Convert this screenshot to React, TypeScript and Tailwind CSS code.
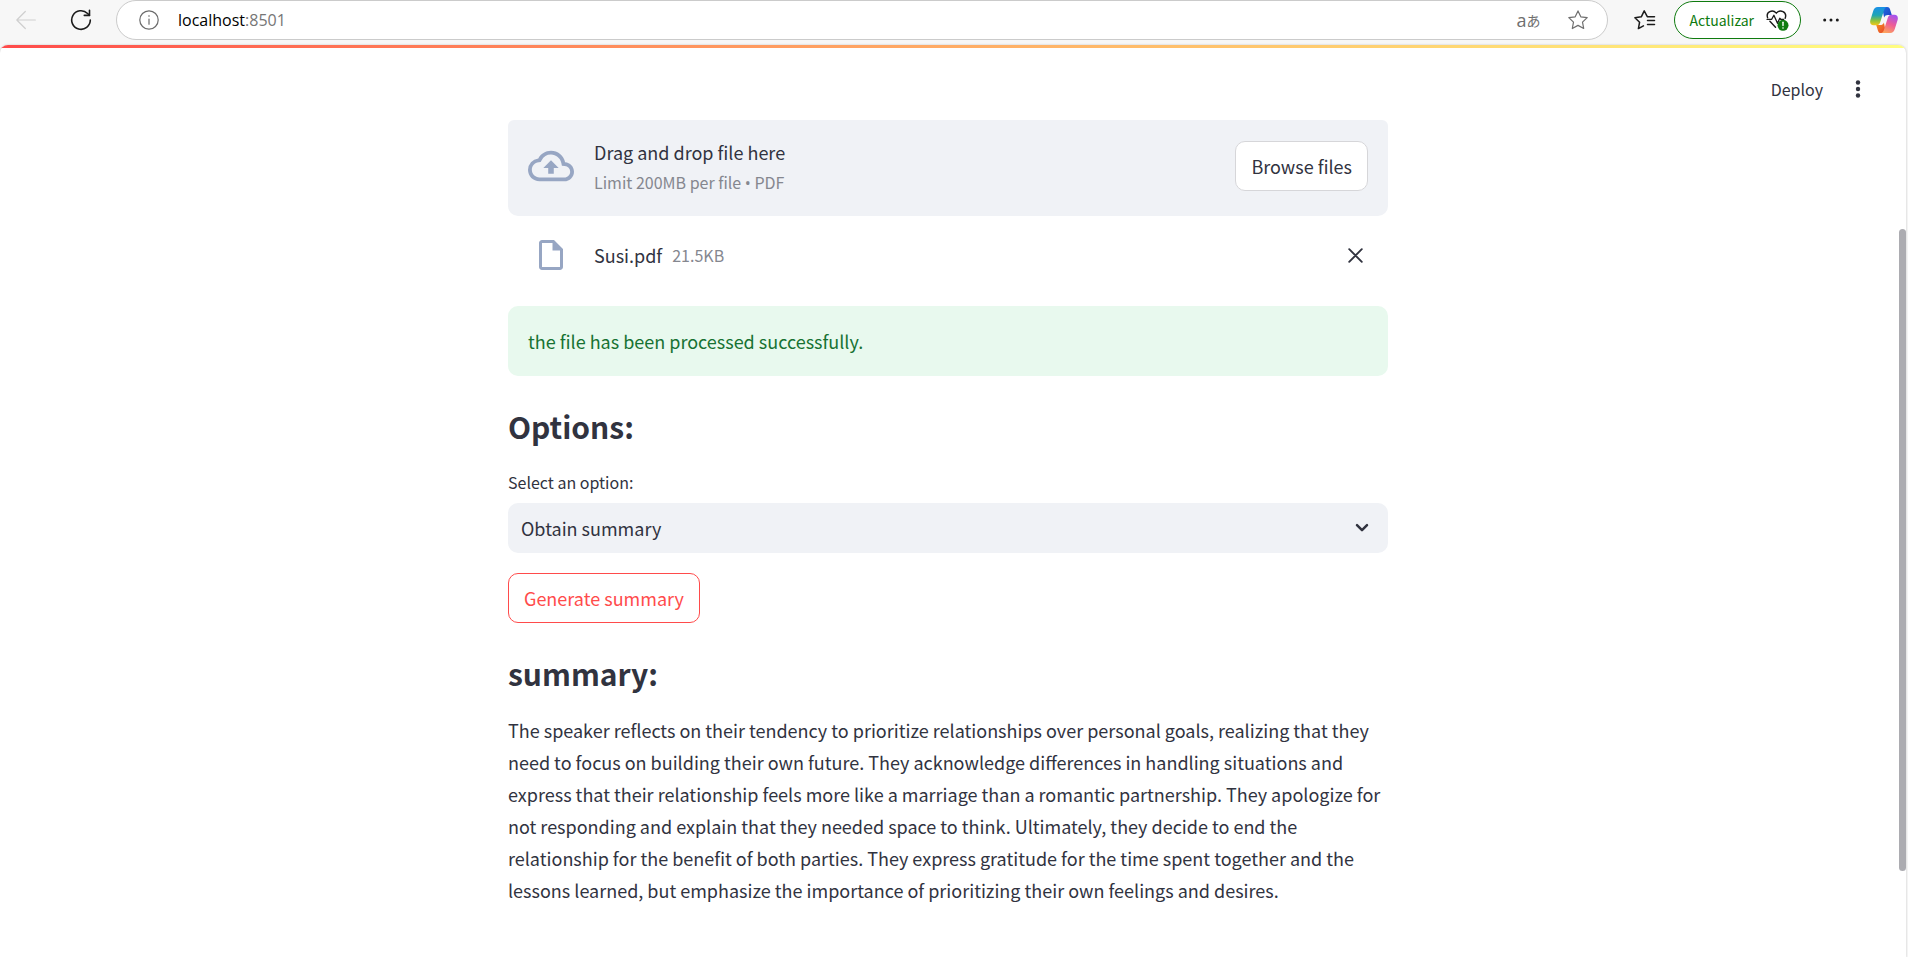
import { useState } from "react";

const SUMMARY =
  "The speaker reflects on their tendency to prioritize relationships over personal goals, realizing that they need to focus on building their own future. They acknowledge differences in handling situations and express that their relationship feels more like a marriage than a romantic partnership. They apologize for not responding and explain that they needed space to think. Ultimately, they decide to end the relationship for the benefit of both parties. They express gratitude for the time spent together and the lessons learned, but emphasize the importance of prioritizing their own feelings and desires.";

function BackIcon() {
  return (
    <svg width="20" height="20" viewBox="0 0 20 20" fill="none" stroke="#cfcfcf" strokeWidth="1.2" strokeLinecap="round" strokeLinejoin="round">
      <path d="M19.3 10H.8M9.3 1.5.8 10l8.5 8.5" />
    </svg>
  );
}

function ReloadIcon() {
  return (
    <svg width="22" height="22" viewBox="0 0 22 22" fill="none" stroke="#1b1b1b" strokeWidth="1.6" strokeLinecap="round" strokeLinejoin="round">
      <path d="M20.3 11A9.3 9.3 0 1 1 17.6 4.5L19.4 6.3" />
      <path d="M19.5 1.2v5.2h-5.2" />
    </svg>
  );
}

function InfoIcon() {
  return (
    <svg width="20" height="20" viewBox="0 0 20 20" fill="none" stroke="#6b6b6b" strokeWidth="1.2" strokeLinecap="round">
      <circle cx="10" cy="10" r="9.2" />
      <path d="M10 9v5.2" />
      <circle cx="10" cy="6" r=".8" fill="#6b6b6b" stroke="none" />
    </svg>
  );
}

function StarIcon() {
  return (
    <svg width="20" height="20" viewBox="0 0 20 20" fill="none" stroke="#6f6f6f" strokeWidth="1.2" strokeLinejoin="round">
      <path d="M10 .9l2.8 5.9 6.4.8-4.7 4.5 1.2 6.4L10 15.4l-5.7 3.1 1.2-6.4L.8 7.6l6.4-.8z" />
    </svg>
  );
}

function FavoritesIcon() {
  return (
    <svg width="22" height="20" viewBox="0 0 22 20" fill="none" stroke="#1b1b1b" strokeWidth="1.5" strokeLinecap="round" strokeLinejoin="round">
      <path d="M20.5 6.7h-7.2L10.2.9 7.3 6.8l-6.4.9 4.7 4.5-1.2 6.4 5-2.7" />
      <path d="M13.5 10.6h7M13.5 14.6h7" />
    </svg>
  );
}

function HealthIcon() {
  return (
    <svg width="23" height="21" viewBox="0 0 23 21" fill="none">
      <path
        d="M1.6 7.7C-.4 1.7 6.6-1.2 10.3 3.1 14-1.2 21.5 1.6 19.2 8.3M3.9 11.3l5.6 5.9"
        stroke="#1b1b1b"
        strokeWidth="1.4"
        strokeLinecap="round"
      />
      <path d="M1 9.3h4.7l2.2-4.1 3.6 8.1 2.3-5 .9 1h3" stroke="#1b1b1b" strokeWidth="1.3" strokeLinecap="round" strokeLinejoin="round" />
      <circle cx="17" cy="15.3" r="5.5" fill="#0f7b0f" />
      <path d="M17 12.3v3.2" stroke="#fff" strokeWidth="1.4" strokeLinecap="round" />
      <circle cx="17" cy="18" r=".8" fill="#fff" />
    </svg>
  );
}

function CopilotIcon() {
  return (
    <svg width="28" height="26" viewBox="0 0 28 26">
      <defs>
        <linearGradient id="cpLeft" x1="0" y1="0" x2="0" y2="1">
          <stop offset="0" stopColor="#1a8fe8" />
          <stop offset=".45" stopColor="#1fa5b5" />
          <stop offset=".75" stopColor="#8fc23c" />
          <stop offset="1" stopColor="#f5c817" />
        </linearGradient>
        <linearGradient id="cpRight" x1=".7" y1="0" x2=".3" y2="1">
          <stop offset="0" stopColor="#a552ee" />
          <stop offset=".5" stopColor="#ee5d96" />
          <stop offset="1" stopColor="#fda45c" />
        </linearGradient>
        <linearGradient id="cpTop" x1="0" y1="0" x2="1" y2="1">
          <stop offset="0" stopColor="#1f6fe0" />
          <stop offset="1" stopColor="#1b3fc4" />
        </linearGradient>
        <linearGradient id="cpBottom" x1="0" y1="0" x2="1" y2="1">
          <stop offset="0" stopColor="#f7931e" />
          <stop offset="1" stopColor="#e5412d" />
        </linearGradient>
      </defs>
      <path d="M12 0h5.2c1.5 0 2.3.8 2.8 2.3l1.8 5.7h-3.8c-2 0-3.2.7-3.9 2.6z" fill="url(#cpTop)" />
      <path d="M16 26h-5.2c-1.5 0-2.3-.8-2.8-2.3L6.2 18h3.8c2 0 3.2-.7 3.9-2.6z" fill="url(#cpBottom)" />
      <path d="M7.8 0H17c-1.5.3-2.3 1.3-2.9 3l-3.9 12.3c-.7 2-1.7 3-3.7 3H3.6C.6 18.3-.4 16 .4 13L3.2 4C4 1.3 5.5 0 7.8 0z" fill="url(#cpLeft)" />
      <path d="M20.2 26H11c1.5-.3 2.3-1.3 2.9-3l3.9-12.3c.7-2 1.7-3 3.7-3h2.9c3 0 4 2.3 3.2 5.3L24.800 22c-.8 2.700-2.300 4-4.600 4z" fill="url(#cpRight)" />
    </svg>
  );
}

function BrowserBar() {
  return (
    <div className="flex h-[45px] items-center bg-[#f7f7f7] pr-[10px] pb-[5px] pl-4">
      <button type="button" aria-label="Back" className="mr-[34px]">
        <BackIcon />
      </button>
      <button type="button" aria-label="Reload" className="mr-6">
        <ReloadIcon />
      </button>
      <div className="flex h-10 flex-1 items-center rounded-full border border-[#cbcbcb] bg-white pr-[19px] pl-[22px]">
        <InfoIcon />
        <span className="ml-[19px] flex-1 font-['Open_Sans',sans-serif] text-base text-[#767676]">
          <span className="text-black">localhost</span>:8501
        </span>
        <button type="button" aria-label="Translate" className="mr-7 flex items-center text-[#6f6f6f]">
          <span className="font-['Open_Sans',sans-serif] text-lg leading-5">a</span>
          <span className="font-['Noto_Sans_CJK_JP',sans-serif] text-sm leading-5">あ</span>
        </button>
        <button type="button" aria-label="Add to favorites">
          <StarIcon />
        </button>
      </div>
      <button type="button" aria-label="Favorites" className="ml-[26px]">
        <FavoritesIcon />
      </button>
      <button
        type="button"
        className="ml-[18px] flex h-[38px] items-center gap-3 rounded-full border border-[#0f7b0f] bg-white pr-[11px] pl-[14px] font-['Noto_Sans_CJK_SC',sans-serif] text-sm text-[#0f7b0f]"
      >
        Actualizar
        <HealthIcon />
      </button>
      <button type="button" aria-label="More" className="mr-[31px] ml-[22px]">
        <svg width="16" height="4" viewBox="0 0 16 4" fill="#1b1b1b">
          <circle cx="1.7" cy="2" r="1.5" />
          <circle cx="8" cy="2" r="1.5" />
          <circle cx="14.3" cy="2" r="1.5" />
        </svg>
      </button>
      <button type="button" aria-label="Copilot">
        <CopilotIcon />
      </button>
    </div>
  );
}

function Uploader() {
  return (
    <section aria-label="File upload">
      <div className="flex items-center rounded-t-md rounded-b-[10px] bg-[#f0f2f6] px-5 pt-4 pb-5">
        <svg width="46" height="46" viewBox="0 0 24 24" fill="#97a6c3">
          <path d="M19.35 10.04A7.49 7.49 0 0 0 12 4C9.11 4 6.6 5.64 5.35 8.04A5.994 5.994 0 0 0 0 14c0 3.31 2.69 6 6 6h13c2.76 0 5-2.24 5-5 0-2.64-2.05-4.78-4.65-4.96zM19 18H6c-2.21 0-4-1.79-4-4 0-2.05 1.53-3.76 3.56-3.97l1.07-.11.5-.95A5.469 5.469 0 0 1 12 6c2.62 0 4.88 1.86 5.39 4.43l.3 1.5 1.53.11A2.98 2.98 0 0 1 22 15c0 1.65-1.35 3-3 3zM8 13h2.55v3h2.9v-3H16l-4-4z" />
        </svg>
        <div className="ml-5 flex-1">
          <div className="text-lg leading-8">Drag and drop file here</div>
          <div className="text-base leading-7 text-[#85878f]">
            Limit 200MB per file <span className="font-['Open_Sans',sans-serif] leading-none">•</span> PDF
          </div>
        </div>
        <button type="button" className="h-[50px] rounded-[10px] border border-[#d6d6d9] bg-white px-[15px] text-lg">
          Browse files
        </button>
      </div>
      <div className="flex items-center pt-[21px] pr-[21px] pl-[25px]">
        <svg width="36" height="36" viewBox="0 0 24 24" fill="#97a6c3">
          <path d="M14 2H6c-1.1 0-1.99.9-1.99 2L4 20c0 1.1.89 2 1.99 2H18c1.1 0 2-.9 2-2V8l-6-6zM6 20V4h7v5h5v11H6z" />
        </svg>
        <span className="ml-[25px] text-lg">Susi.pdf</span>
        <span className="ml-[10px] flex-1 text-base text-[#85878f]">21.5KB</span>
        <button type="button" aria-label="Remove file" className="p-1">
          <svg width="15" height="15" viewBox="0 0 15 15" fill="none" stroke="#31333f" strokeWidth="1.9" strokeLinecap="round">
            <path d="M1.2 1.2l12.6 12.6M13.8 1.2L1.2 13.8" />
          </svg>
        </button>
      </div>
    </section>
  );
}

export default function App() {
  const [option, setOption] = useState("Obtain summary");
  return (
    <div className="flex min-h-screen flex-col bg-[#f7f7f7]">
      <BrowserBar />
      <div className="mr-[2px] flex flex-1 flex-col overflow-hidden rounded-t-lg bg-white font-['Noto_Sans_CJK_SC',sans-serif] text-[#31333f] shadow-[0_0_2px_#bbbbbb]">
        <div className="h-[3px] bg-linear-to-r from-[#ff4b4b] to-[#fffd80]" />
        <div className="flex flex-1">
          <div className="flex-1">
            <header className="flex h-[72px] items-center justify-end pt-[18px] pr-[31px] pb-2">
              <button type="button" className="mr-7 text-base">
                Deploy
              </button>
              <button type="button" aria-label="Menu" className="px-1">
                <svg width="6" height="18" viewBox="0 0 6 18" fill="#31333f">
                  <circle cx="3" cy="2.5" r="2.2" />
                  <circle cx="3" cy="9" r="2.2" />
                  <circle cx="3" cy="15.5" r="2.2" />
                </svg>
              </button>
            </header>
            <main className="mx-auto w-full max-w-[880px]">
              <Uploader />
              <div className="mt-[33px] rounded-[10px] bg-[#e8f9ee] px-5 py-[19px] text-lg leading-8 text-[#177233]">
                the file has been processed successfully.
              </div>
              <h2 className="mt-[30px] text-3xl leading-10 font-bold">Options:</h2>
              <label htmlFor="option" className="mt-[22px] block text-base leading-7">
                Select an option:
              </label>
              <div className="relative mt-[7px]">
                <select
                  id="option"
                  value={option}
                  onChange={(e) => setOption(e.target.value)}
                  className="h-[50px] w-full appearance-none rounded-[10px] bg-[#f0f2f6] px-[13px] text-lg"
                >
                  <option>Obtain summary</option>
                </select>
                <svg className="pointer-events-none absolute top-5 right-[19px]" width="14" height="10" viewBox="0 0 14 10" fill="none" stroke="#31333f" strokeWidth="2.5" strokeLinecap="round" strokeLinejoin="round">
                  <path d="M2 2.2l5 5 5-5" />
                </svg>
              </div>
              <button type="button" className="mt-5 h-[50px] rounded-[10px] border border-[#ff4b4b] px-[15px] text-lg text-[#ff4b4b]">
                Generate summary
              </button>
              <h2 className="mt-[30px] text-3xl leading-10 font-bold">summary:</h2>
              <p className="mt-[21px] text-lg leading-8">{SUMMARY}</p>
            </main>
          </div>
          <div className="flex w-[10px] flex-col pt-[181px] pb-[86px] pl-[3px]">
            <div className="flex-1 rounded-full bg-[#acacb1]" />
          </div>
        </div>
      </div>
    </div>
  );
}
